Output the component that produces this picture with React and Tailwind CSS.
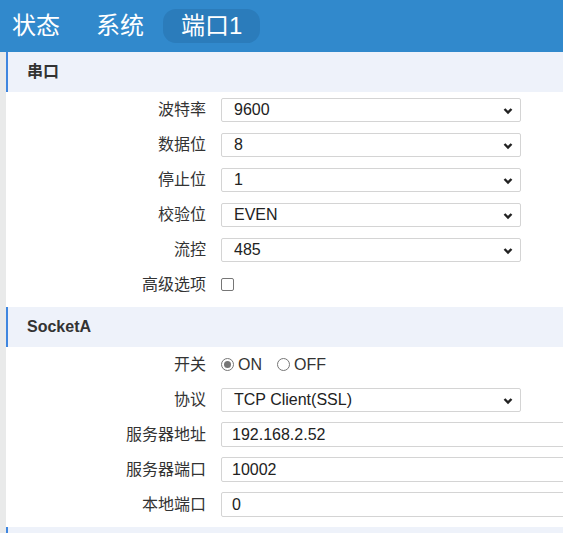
const Chevron = () => (
  <svg className="absolute right-[7px] top-[8px]" width="10" height="8" viewBox="0 0 10 8">
    <path d="M1.5 2 L5 5.5 L8.5 2" fill="none" stroke="#222" strokeWidth="2.4" />
  </svg>
);

const SelectBox = ({ value }) => (
  <div className="relative h-[24px] w-[300px] rounded-[2px] border border-[#d4d4d4] bg-white pl-[12px] text-[16px] leading-[22px] text-[#222]">
    {value}
    <Chevron />
  </div>
);

const TextBox = ({ value }) => (
  <div className="h-[25px] w-[420px] shrink-0 rounded-[2px] border border-[#d4d4d4] bg-white pl-[10px] text-[16px] leading-[23px] text-[#222]">
    {value}
  </div>
);

const Row = ({ label, children }) => (
  <div className="flex h-[35px] items-center">
    <div className="w-[200px] shrink-0 text-right text-[16px] text-[#333]">{label}</div>
    <div className="ml-[15px] flex items-center">{children}</div>
  </div>
);

const SectionHead = ({ title }) => (
  <div className="flex h-[40px] items-center border-l-2 border-[#3f86df] bg-[#eef2fa] pl-[19px] text-[16px] font-bold text-[#333]">
    {title}
  </div>
);

const Radio = ({ checked, label }) => (
  <label className="mr-[15px] flex items-center text-[16px] text-[#333]">
    <span className="flex h-[13px] w-[13px] items-center justify-center rounded-full border border-[#767676] bg-white">
      {checked && <span className="h-[7px] w-[7px] rounded-full bg-[#767676]" />}
    </span>
    <span className="ml-[4px]">{label}</span>
  </label>
);

export default function App() {
  return (
    <div
      className="h-[533px] w-[563px] overflow-hidden bg-white"
      style={{ fontFamily: '"Liberation Sans", "Noto Sans CJK SC", sans-serif' }}
    >
      <div className="flex h-[52px] items-center bg-[#3189cc] pl-[12px] text-[24px] text-white">
        <span>状态</span>
        <span className="ml-[36px]">系统</span>
        <span className="ml-[19px] flex h-[34px] items-center rounded-[13px] bg-[#2b7cbb] px-[18px]">端口1</span>
      </div>
      <div className="flex">
        <div className="w-[6px] shrink-0 bg-[#e9eaea]" />
        <div className="min-w-0 flex-1">
          <SectionHead title="串口" />
          <div className="pb-[5px]">
            <Row label="波特率"><SelectBox value="9600" /></Row>
            <Row label="数据位"><SelectBox value="8" /></Row>
            <Row label="停止位"><SelectBox value="1" /></Row>
            <Row label="校验位"><SelectBox value="EVEN" /></Row>
            <Row label="流控"><SelectBox value="485" /></Row>
            <Row label="高级选项">
              <span className="h-[13px] w-[13px] rounded-[2px] border border-[#767676] bg-white" />
            </Row>
          </div>
          <SectionHead title="SocketA" />
          <div className="pb-[5px]">
            <Row label="开关">
              <Radio checked label="ON" />
              <Radio label="OFF" />
            </Row>
            <Row label="协议"><SelectBox value="TCP Client(SSL)" /></Row>
            <Row label="服务器地址"><TextBox value="192.168.2.52" /></Row>
            <Row label="服务器端口"><TextBox value="10002" /></Row>
            <Row label="本地端口"><TextBox value="0" /></Row>
          </div>
          <div className="h-[40px] border-l-2 border-[#3f86df] bg-[#eef2fa]" />
        </div>
      </div>
    </div>
  );
}
